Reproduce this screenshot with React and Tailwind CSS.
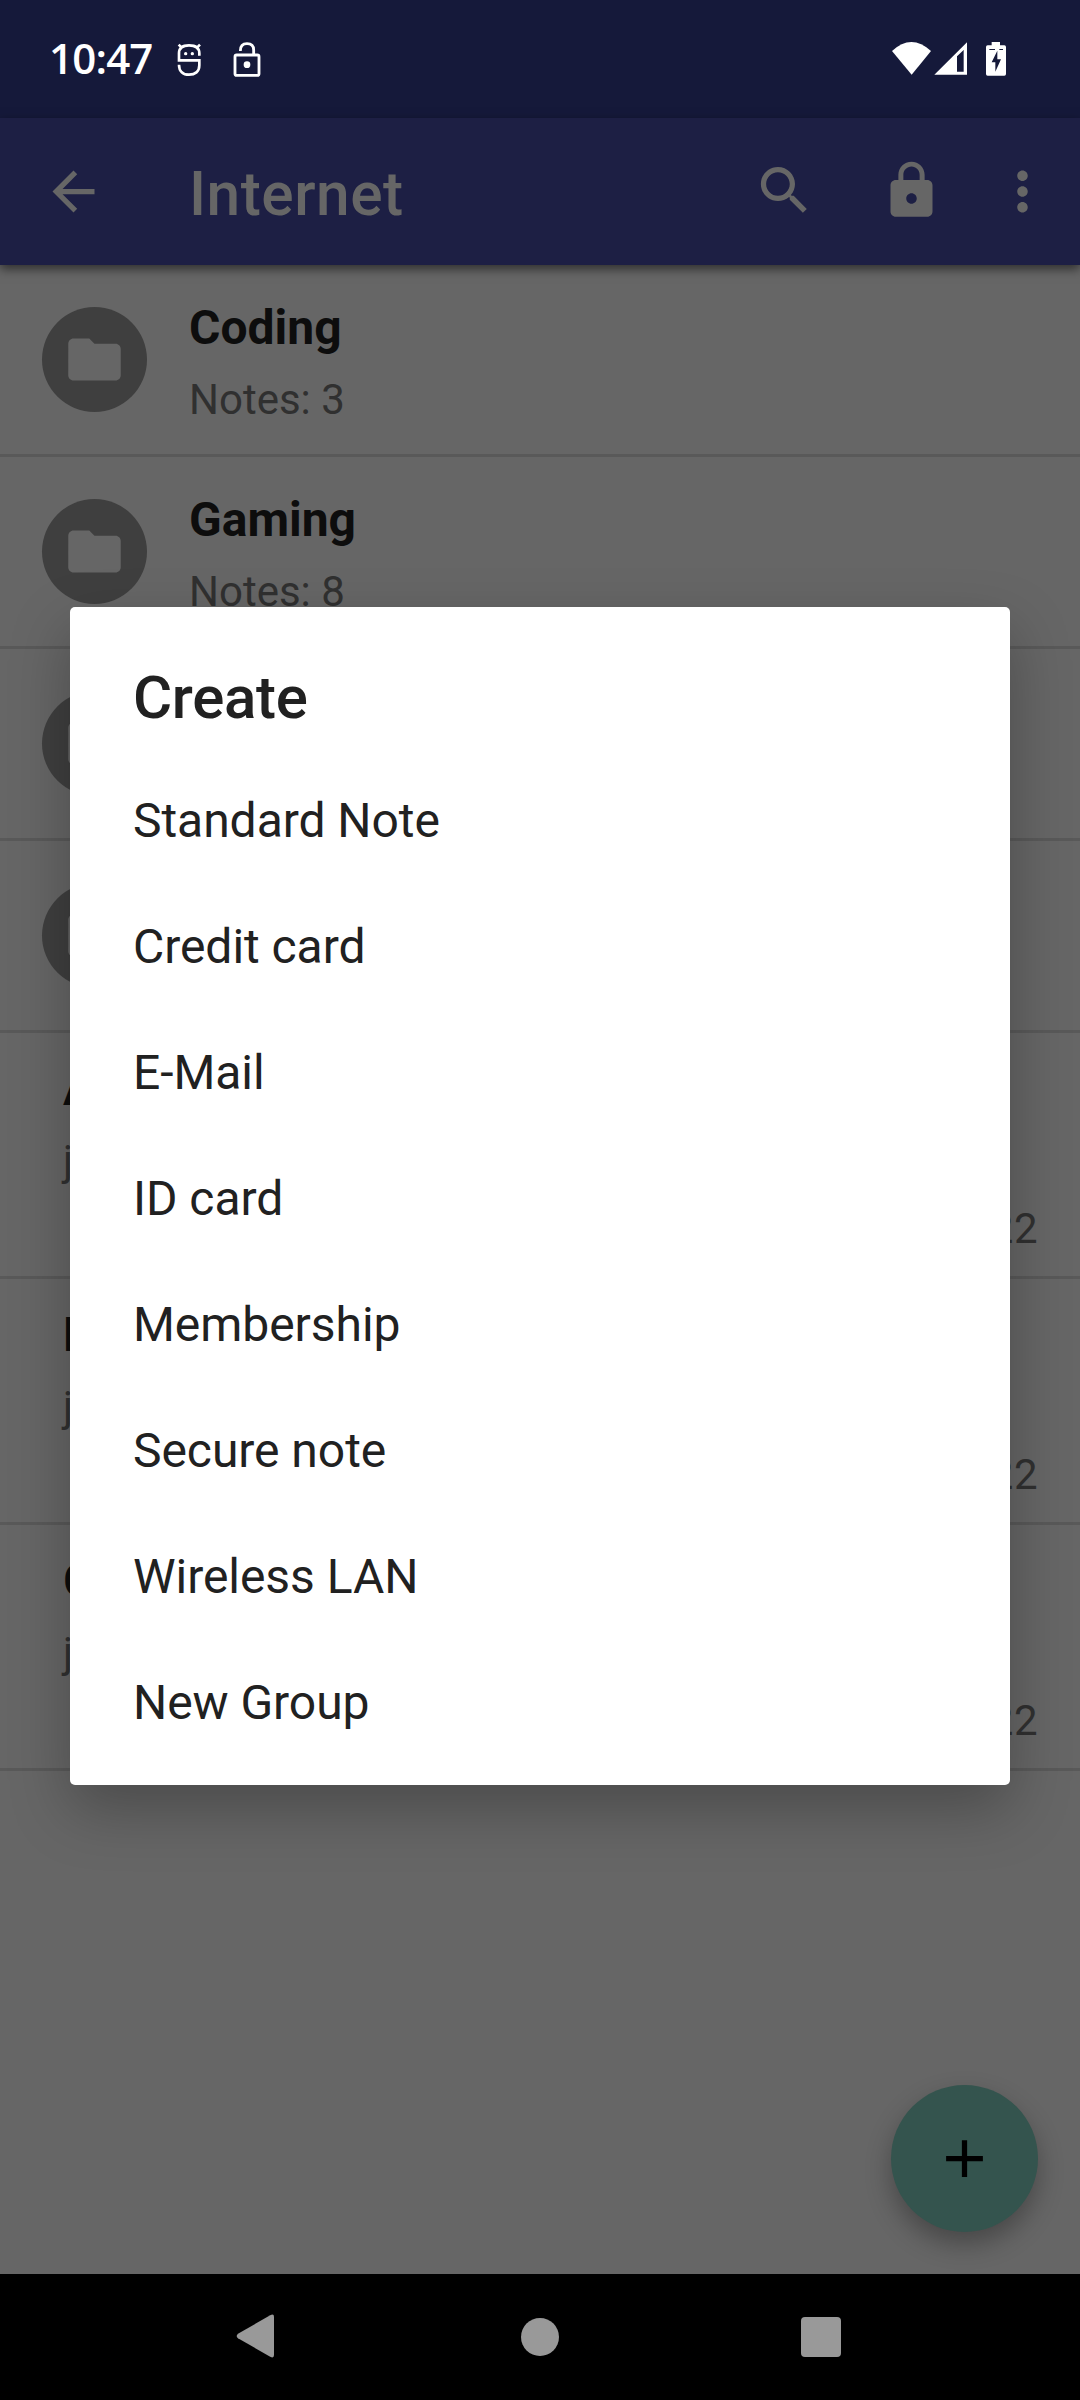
const createOptions = [
  "Standard Note",
  "Credit card",
  "E-Mail",
  "ID card",
  "Membership",
  "Secure note",
  "Wireless LAN",
  "New Group",
];

const folders = [
  { name: "Coding", notes: "Notes: 3" },
  { name: "Gaming", notes: "Notes: 8" },
  {},
  {},
];

const notes = [
  { title: "A", user: "j", year: "22" },
  { title: "E", user: "j", year: "22" },
  { title: "G", user: "j", year: "22" },
];

function MaterialIcon({ d, className = "" }) {
  return (
    <svg viewBox="0 0 24 24" fill="currentColor" className={`size-[63px] shrink-0 ${className}`}>
      <path d={d} />
    </svg>
  );
}

const BACK = "M20 11H7.83l5.59-5.59L12 4l-8 8 8 8 1.41-1.41L7.83 13H20v-2z";
const SEARCH =
  "M15.5 14h-.79l-.28-.27C15.41 12.59 16 11.11 16 9.5 16 5.91 13.09 3 9.5 3S3 5.91 3 9.5 5.91 16 9.5 16c1.61 0 3.09-.59 4.23-1.57l.27.28v.79l5 4.99L20.49 19l-4.99-5zm-6 0C7.01 14 5 11.99 5 9.5S7.01 5 9.5 5 14 7.01 14 9.5 11.99 14 9.5 14z";
const LOCK =
  "M18 8h-1V6c0-2.76-2.24-5-5-5S7 3.24 7 6v2H6c-1.1 0-2 .9-2 2v10c0 1.1.9 2 2 2h12c1.1 0 2-.9 2-2V10c0-1.1-.9-2-2-2zm-6 9c-1.1 0-2-.9-2-2s.9-2 2-2 2 .9 2 2-.9 2-2 2zm3.1-9H8.9V6c0-1.71 1.39-3.1 3.1-3.1 1.71 0 3.1 1.39 3.1 3.1v2z";
const MORE =
  "M12 8c1.1 0 2-.9 2-2s-.9-2-2-2-2 .9-2 2 .9 2 2 2zm0 2c-1.1 0-2 .9-2 2s.9 2 2 2 2-.9 2-2-.9-2-2-2zm0 6c-1.1 0-2 .9-2 2s.9 2 2 2 2-.9 2-2-.9-2-2-2z";
const FOLDER =
  "M10 4H4c-1.1 0-1.99.9-1.99 2L2 18c0 1.1.9 2 2 2h16c1.1 0 2-.9 2-2V8c0-1.1-.9-2-2-2h-8l-2-2z";
const PLUS = "M19 13h-6v6h-2v-6H5v-2h6V5h2v6h6v2z";

function StatusBar() {
  return (
    <header className="flex h-[118px] items-start bg-[#15193a] text-white">
      <span className="ml-[49px] mt-[33px] w-[108px] whitespace-nowrap font-['Open_Sans',sans-serif] text-[42px] font-semibold leading-[50px] tracking-[-0.8px]">
        10:47
      </span>
      <svg viewBox="405 36 84 108" className="ml-[18px] mt-[42px] h-9 w-7" fill="none" stroke="currentColor" strokeWidth="8">
        <path d="M478 77V70C478 52 466 46 447 46S417 52 417 70V91H478V106C478 125 465 134 447 134S417 124 417 104" />
        <path d="M416 44l9 9M480 44l-9 9" />
        <circle cx="437" cy="71" r="5" fill="currentColor" stroke="none" />
        <circle cx="457" cy="71" r="5" fill="currentColor" stroke="none" />
      </svg>
      <svg viewBox="573 30 96 114" className="ml-7 mt-10 h-[38px] w-8" fill="none" stroke="currentColor" strokeWidth="8.5">
        <rect x="585" y="75" width="72" height="61" rx="5" />
        <path d="M601 63C601 48 608 41 621 41S641 48 641 60V73" />
        <circle cx="621" cy="104" r="10" fill="currentColor" stroke="none" />
      </svg>
      <svg viewBox="33 33 123 105" className="ml-auto mt-[41px] h-[35px] w-[41px]" fill="currentColor">
        <path d="M36 63Q94 9 153 63L95 134Z" />
      </svg>
      <svg viewBox="159 33 105 105" className="ml-px mt-[41px] size-[35px]" fill="currentColor">
        <path fillRule="evenodd" d="M163 134L261 37V134ZM231 79V125H251V60Z" />
      </svg>
      <svg viewBox="315 33 66 108" className="ml-[17px] mr-[73px] mt-[41px] h-9 w-[22px]" fill="currentColor">
        <path
          fillRule="evenodd"
          d="M335 36h25v10h13q5 0 5 5v81q0 5-5 5h-50q-5 0-5-5V51q0-5 5-5h12zM328 57v3h17v-3zM358 57v3h11v-3zM352 62L335 97h11v28l17-37h-11z"
        />
      </svg>
    </header>
  );
}

function AppBar() {
  return (
    <div className="relative z-10 flex h-[147px] items-center bg-[#1d1f44] text-[#666666] shadow-[0_4px_10px_rgba(0,0,0,0.55)]">
      <MaterialIcon d={BACK} className="ml-[42px]" />
      <h1 className="ml-[84px] mt-[6px] text-[60.4px] font-medium leading-[72px] tracking-[0.5px]">Internet</h1>
      <MaterialIcon d={SEARCH} className="-mt-[2px] ml-auto" />
      <MaterialIcon d={LOCK} className="-mt-[2px] ml-[64px]" />
      <MaterialIcon d={MORE} className="ml-[48px] mr-[26px]" />
    </div>
  );
}

function FolderRow({ name, notes }) {
  return (
    <li className="flex h-[192px] border-b-[3px] border-[#595959] pl-[42px]">
      <span className="mt-[42px] flex size-[105px] shrink-0 items-center justify-center rounded-full bg-[#3f3f3f] text-[#666666]">
        <MaterialIcon d={FOLDER} />
      </span>
      <div className="ml-[42px] pt-[35px]">
        <p className="text-[48px] font-bold leading-[56px] text-[#0d0d0d]">{name}</p>
        <p className="mt-[20px] text-[42px] leading-[48px] text-[#303030]">{notes}</p>
      </div>
    </li>
  );
}

function NoteRow({ title, user, year }) {
  return (
    <li className="h-[246px] border-b-[3px] border-[#595959] pl-[63px] pr-[42px] pt-[28px] text-[42px] leading-[48px] text-[#303030]">
      <p className="text-[48px] font-bold leading-[56px] text-[#0d0d0d]">{title}</p>
      <p className="mt-[20px]">{user}</p>
      <p className="mt-[20px] text-right tracking-[0.5px]">{year}</p>
    </li>
  );
}

function CreateDialog() {
  return (
    <section
      role="dialog"
      className="absolute left-[70px] top-[607px] z-20 h-[1178px] w-[940px] rounded-[5px] bg-white px-[63px] pt-[55px] text-[#212121] shadow-[0_24px_60px_rgba(0,0,0,0.27)]"
    >
      <h2 className="mb-[24px] text-[60px] font-medium leading-[72px] tracking-[-0.3px]">Create</h2>
      <ul>
        {createOptions.map((option) => (
          <li key={option} className="h-[126px] text-[48px] leading-[126px] tracking-[-0.05px]">
            {option}
          </li>
        ))}
      </ul>
    </section>
  );
}

function NavBar() {
  return (
    <nav className="relative z-10 flex h-[126px] items-center bg-black pl-[236px] text-[#999999]">
      <svg viewBox="0 0 38 44" className="h-11 w-[38px] -translate-y-px" fill="currentColor">
        <path d="M34.2 1.3Q38 -0.8 38 3V41Q38 44.8 34.2 42.700L2 24.300Q-.6 22 2 19.700Z" />
      </svg>
      <span className="ml-[247px] size-[38px] rounded-full bg-[#999999]" />
      <span className="ml-[242px] size-[40px] rounded-[4px] bg-[#999999]" />
    </nav>
  );
}

export default function App() {
  return (
    <div className="relative flex h-[2400px] w-[1080px] flex-col overflow-hidden bg-[#666666] font-['Roboto',sans-serif]">
      <StatusBar />
      <AppBar />
      <main className="flex-1">
        <ul>
          {folders.map((folder, i) => (
            <FolderRow key={i} {...folder} />
          ))}
          {notes.map((note) => (
            <NoteRow key={note.title} {...note} />
          ))}
        </ul>
      </main>
      <button className="absolute bottom-[168px] right-[42px] flex size-[147px] items-center justify-center rounded-full bg-[#34544e] text-black shadow-[0_12px_26px_rgba(0,0,0,0.3)]">
        <MaterialIcon d={PLUS} />
      </button>
      <NavBar />
      <CreateDialog />
    </div>
  );
}
